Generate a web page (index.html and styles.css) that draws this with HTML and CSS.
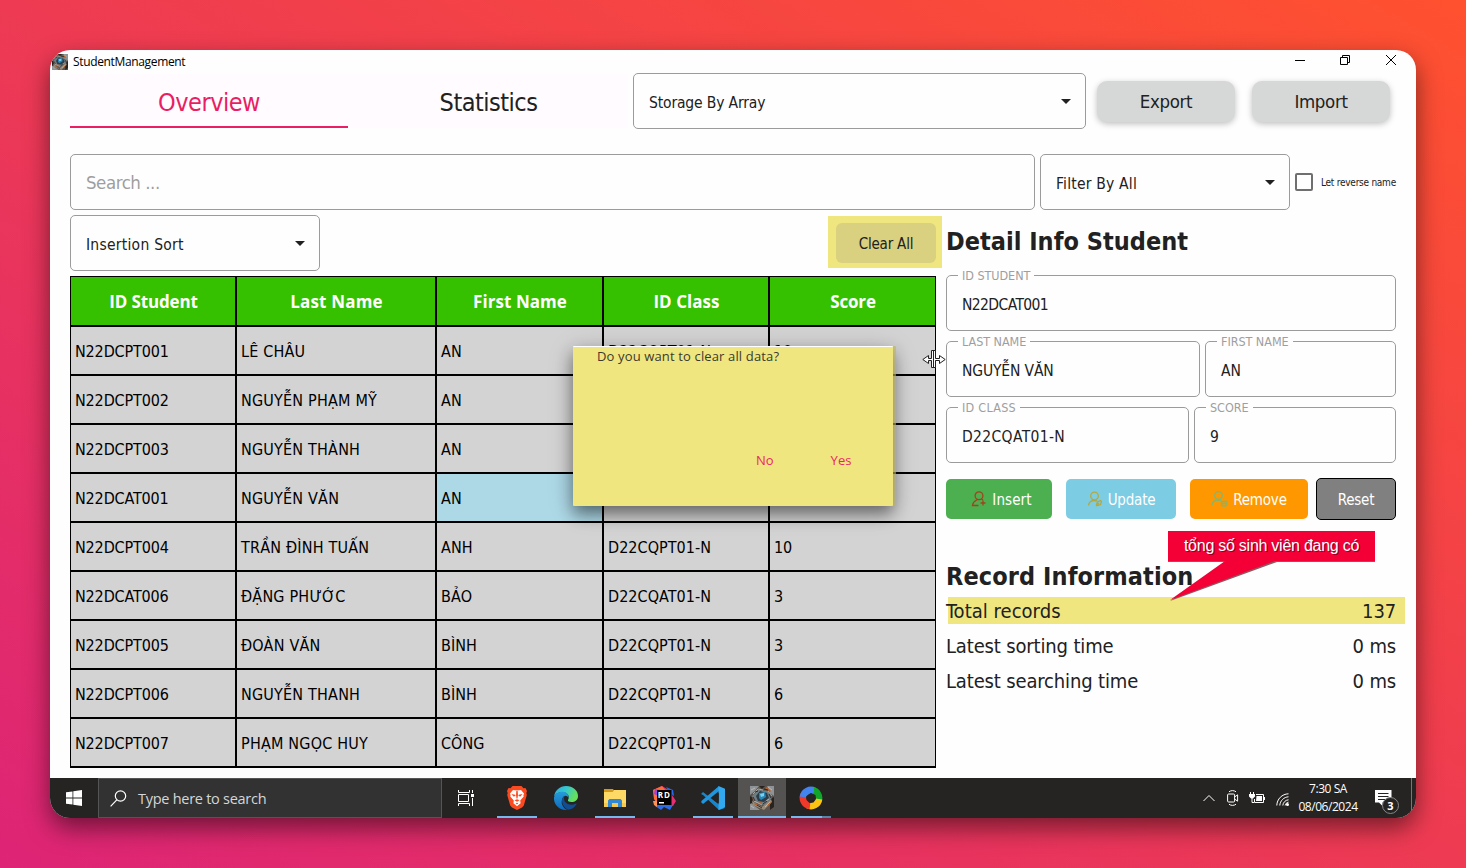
FILE: index.html
```html
<!DOCTYPE html>
<html lang="vi">
<head>
<meta charset="utf-8">
<title>StudentManagement</title>
<link rel="stylesheet" href="styles.css">
</head>
<body>
<svg class="defs" width="0" height="0" aria-hidden="true">
  <defs>
    <symbol id="app-art" viewBox="0 0 24 24">
      <path fill="#5c544c" d="M0 0h24v24H0z"/>
      <path fill="#8d9396" d="M0 0h9L5 5 0 9zM17 0h7v10l-4-3zM0 16l6 5 4 3H0z"/>
      <path fill="#29231f" d="M9 0h6l-3 3zM20 13l4-2v10l-4 3zM0 10l3 2-1 5-2 1z"/>
      <path fill="#9a8b78" d="M2 15l10 6 9-8 1 3-8 8-11-5z"/>
      <path fill="#6e7c84" d="M2 10l6-6 10 1 4 7-8 7-10-3z"/>
      <path fill="#b65f2c" d="M4 18l3 2 1-1-3-2zM15 2l5 4 1-1-4-4zM2 12l2 3 1-1zM17 19l3-3 1 1-3 3zM7 15l5 1-1 1-4-1z"/>
      <path fill="#2c3c48" d="M6 10l4-5 7 2 2 5-5 4-6-1z"/>
      <path fill="#2a86b4" d="M9 7l6-1 1 5-5 3-2-2z"/>
      <path fill="#7bd2ee" d="M10 8l4-1v3l-3 1z"/>
      <path fill="none" stroke="#cfcabe" stroke-width=".7" d="M3 8l5-5 5 1M18 5l4 5M4 15l8 4M15 21l5-5M1 4l4-2M18 1l4 3M16 15l3-2M1 20l3 2"/>
      <path fill="none" stroke="#1d1a18" stroke-width=".8" d="M5 6l3-1M19 8l2 4M7 19l5 3M13 18l4-3M14 3l4 1M3 11l2 4"/>
    </symbol>
    <symbol id="caret" viewBox="0 0 10 5"><path d="M0 0h10L5 5z"/></symbol>
  </defs>
</svg>

<div class="window">
  <header class="titlebar">
    <svg class="titlebar-icon"><use href="#app-art"/></svg>
    <span class="titlebar-name">StudentManagement</span>
    <div class="window-controls">
      <svg width="10" height="10" viewBox="0 0 10 10"><path d="M0 5.500h10"/></svg>
      <svg width="10" height="10" viewBox="0 0 10 10"><path d="M.5 2.500h7v7h-7zM2.500 2.500v-2h7v7h-2"/></svg>
      <svg width="10" height="10" viewBox="0 0 10 10"><path d="M0 0l10 10M10 0L0 10"/></svg>
    </div>
  </header>

  <main class="content">
    <div class="row-top">
      <nav class="tabs">
        <div class="tab tab-active">Overview</div>
        <div class="tab">Statistics</div>
      </nav>
      <div class="box select storage"><span>Storage By Array</span><svg class="caret"><use href="#caret"/></svg></div>
      <div class="file-actions">
        <button class="btn-file">Export</button>
        <button class="btn-file">Import</button>
      </div>
    </div>

    <div class="row-search">
      <div class="box search">Search ...</div>
      <div class="box select filter"><span>Filter By All</span><svg class="caret"><use href="#caret"/></svg></div>
      <div class="reverse"><i class="checkbox"></i><span>Let reverse name</span></div>
    </div>

    <div class="row-main">
      <section class="left">
        <div class="list-tools">
          <div class="box select sort"><span>Insertion Sort</span><svg class="caret"><use href="#caret"/></svg></div>
          <div class="clear-mark"><button class="btn-clear">Clear All</button></div>
        </div>
        <div class="table">
          <div class="th">ID Student</div><div class="th">Last Name</div><div class="th">First Name</div><div class="th">ID Class</div><div class="th">Score</div>
          <div>N22DCPT001</div><div>LÊ CHÂU</div><div>AN</div><div>D22CQPT01-N</div><div>10</div>
          <div>N22DCPT002</div><div>NGUYỄN PHẠM MỸ</div><div>AN</div><div></div><div></div>
          <div>N22DCPT003</div><div>NGUYỄN THÀNH</div><div>AN</div><div></div><div></div>
          <div>N22DCAT001</div><div>NGUYỄN VĂN</div><div class="picked">AN</div><div>D22CQAT01-N</div><div></div>
          <div>N22DCPT004</div><div>TRẦN ĐÌNH TUẤN</div><div>ANH</div><div>D22CQPT01-N</div><div>10</div>
          <div>N22DCAT006</div><div>ĐẶNG PHƯỚC</div><div>BẢO</div><div>D22CQAT01-N</div><div>3</div>
          <div>N22DCPT005</div><div>ĐOÀN VĂN</div><div>BÌNH</div><div>D22CQPT01-N</div><div>3</div>
          <div>N22DCPT006</div><div>NGUYỄN THANH</div><div>BÌNH</div><div>D22CQPT01-N</div><div>6</div>
          <div>N22DCPT007</div><div>PHẠM NGỌC HUY</div><div>CÔNG</div><div>D22CQPT01-N</div><div>6</div>
        </div>
      </section>

      <section class="right">
        <h2 class="t-detail">Detail Info Student</h2>
        <div class="fields">
          <div class="box field f-id"><label>ID STUDENT</label>N22DCAT001</div>
          <div class="field-pair pair-name">
            <div class="box field"><label>LAST NAME</label>NGUYỄN VĂN</div>
            <div class="box field"><label>FIRST NAME</label>AN</div>
          </div>
          <div class="field-pair pair-class">
            <div class="box field f-class"><label>ID CLASS</label>D22CQAT01-N</div>
            <div class="box field"><label>SCORE</label>9</div>
          </div>
        </div>
        <div class="actions">
          <button class="act insert"><svg width="16" height="16" viewBox="0 0 16 16"><circle cx="8" cy="4.700" r="3.900"/><path d="M5.500 8C8 9.500 2 8.500 1.500 14.500H7.500M9.500 12h5M12 9.500v5M10.500 8l1.500 1"/></svg>Insert</button>
          <button class="act update"><svg width="16" height="16" viewBox="0 0 16 16"><circle cx="7.500" cy="5" r="3.800"/><path d="M1.500 14.500c.3-3 2.500-5 6-5 1 0 2 .3 2.500.8M9.500 13.500l1-2.500 3-1.500 1 1.200-1 2.800-3 1zM9 15l3-3"/></svg>Update</button>
          <button class="act remove"><svg width="17" height="16" viewBox="0 0 17 16"><circle cx="7.500" cy="4.500" r="3.800"/><path d="M1 14.500c.2-3.500 2.500-5.500 6.500-5.500 1.200 0 2 .3 2.700.8M10.500 10.500h5.500v3c0 2-5.500 2-5.500 0zM10.500 12.500h5.500"/></svg>Remove</button>
          <button class="act reset">Reset</button>
        </div>
        <h2 class="t-record">Record Information</h2>
        <div class="stats">
          <div class="stat stat-marked"><span>Total records</span><span>137</span></div>
          <div class="stat"><span>Latest sorting time</span><span>0 ms</span></div>
          <div class="stat"><span>Latest searching time</span><span>0 ms</span></div>
        </div>
        <div class="callout">
          <svg width="207" height="72" viewBox="0 0 207 72">
            <path class="callout-shade" d="M0 1h207v30H109L2 70l55-39H0z"/>
            <path class="callout-fill" d="M0 0h207v30H107L2 69 57 30H0z"/>
          </svg>
          <span>tổng số sinh viên đang có</span>
        </div>
      </section>
    </div>
  </main>

  <div class="dialog">
    <p>Do you want to clear all data?</p>
    <div class="dialog-buttons"><button>No</button><button>Yes</button></div>
  </div>

  <svg class="cursor" width="24" height="20" viewBox="0 0 24 20">
    <path d="M9.500 9.500H6.500v-3L.800 10.500l5.700 4v-3h3v7h4v-7h4v3l5.700-4-5.700-4v3h-4v-8h-4zM11.500 1v17"/>
  </svg>

  <footer class="taskbar">
    <div class="start"><svg width="16" height="16" viewBox="0 0 16 16"><path fill="#fff" d="M0 2.300l6.500-.9v6.100H0zM7.300 1.300L16 0v7.500H7.300zM0 8.400h6.500v6.200L0 13.700zM7.300 8.400H16V16l-8.700-1.300z"/></svg></div>
    <div class="taskbar-search">
      <svg width="17" height="17" viewBox="0 0 17 17"><circle cx="10.500" cy="6" r="5.200"/><path d="M6.800 9.800L.600 16.300"/></svg>
      <span>Type here to search</span>
    </div>
    <div class="slot taskview"><svg width="17" height="16" viewBox="0 0 17 16"><path d="M.5 0v2.500h11V0M.5 16v-2.500h11V16M.5 4.500h10v7h-10zM14.500 0v3M14.500 8v8" fill="none" stroke="#fff"/><path fill="#fff" d="M13 4h3v3h-3z"/></svg></div>
    <div class="slot open">
      <svg width="20" height="24" viewBox="0 0 20 24"><path fill="#fb4a20" d="M5.500 0h9l2 2.300 2-.2L20 5l-.7 2 .5 2-3 10.500-1.800 2L10 24l-5-2.500-1.800-2L.2 9l.5-2L0 5l1.500-2.900 2 .2z"/><path fill="#fff" d="M6 4l4 .6L14 4l3 3.500-.6 2 .3 1-3.500 4 .4 2.800-3.600 3-3.600-3 .4-2.800-3.500-4 .3-1-.6-2z"/><path fill="#fb4a20" d="M4.500 8l3.700.7.500 1.400-2.200.4zM15.500 8l-3.700.7-.5 1.400 2.200.4zM9.300 5h1.400l.3 4-.5 3.500h-1L9 9zM7.500 14.300l2.500-1.100 2.500 1.100-2.500 1.500zM8.700 17.300l1.300-.6 1.300.6-1.300 1.200z"/></svg>
    </div>
    <div class="slot">
      <svg width="24" height="24" viewBox="0 0 24 24">
        <defs><linearGradient id="eg" x1="0" y1="0" x2="1" y2=".4"><stop offset="0" stop-color="#2ba8e0"/><stop offset=".5" stop-color="#36c7cf"/><stop offset="1" stop-color="#66e05a"/></linearGradient><linearGradient id="eb" x1="0" y1="0" x2="0" y2="1"><stop offset="0" stop-color="#249ddb"/><stop offset="1" stop-color="#1166b8"/></linearGradient></defs>
        <path fill="url(#eg)" d="M0 11C.8 4 6 0 12 0c7 0 12 4.500 12 10 0 4-3 6-6.500 6-2.500 0-4-1-3.500-2 2.500-4-1-8-5.500-8C4 6 1 8.500 0 11z"/>
        <path fill="url(#eb)" d="M0 11.500C1 8 4.500 5.800 8.500 5.800c4 0 6.500 3 6 6.200-.5-1.500-2-2.300-3.500-2.300-3 2-4 5.500-3 8.500 1 3 3 5 5.500 5.800C5 24.500-.5 18.500 0 11.500z"/>
        <path fill="#114d91" d="M10.500 9.800C6.500 12 7 20 14 23.800c3.500-.4 6.500-2.300 8.500-5.600.2-.5-.2-.8-.8-.5C16 20.500 10 17 10 12.500c0-1 .2-2 .5-2.700z"/>
      </svg>
    </div>
    <div class="slot open">
      <svg width="22" height="18" viewBox="0 0 22 18"><path fill="#ffd966" d="M0 1h22v17H0z"/><path fill="#d79a16" d="M0 0h9l1 1.500L8.500 3H0z"/><path fill="#f5c84e" d="M0 14h22v4H0z"/><path fill="#3189d4" d="M4 18v-6.500L5.500 10h11l1.500 1.500V18h-4v-4H8v4z"/></svg>
    </div>
    <div class="slot">
      <svg width="24" height="24" viewBox="0 0 24 24"><path fill="#e62f70" d="M1 4l9-4 5 3 4 2 1 4 4 6-3 5H5L2 12z"/><path fill="#ff6c37" d="M1 4l9-4 4 5-9 12-3-4z"/><path fill="#9b42df" d="M3 3l5 1-2 6-4-2z"/><path fill="#2b6be8" d="M14 1l7 3 1 6-4-3zM8 19l6-2 7 2-3 5-6-3-3 3-6-4 1-4z"/><path fill="#ff9155" d="M1 15h4v6l-3-2z"/><path d="M5 4h14.500v15H5z"/><text x="5.800" y="11.800" class="rd" textLength="12">RD</text><path fill="#fff" d="M7 16h5v1.500H7z"/></svg>
    </div>
    <div class="slot open">
      <svg width="24" height="24" viewBox="0 0 24 24"><path fill="#1687cf" d="M0 8l2-2 16.500 13L24 22l-6 2-16-15z"/><path fill="#2196dd" d="M0 16l2 2L18 5V0L1 14.500z"/><path fill="#32a9ee" d="M17.500 0L24 2.800v18.400L17.500 24z"/><path fill="#252422" d="M17.800 6.800v10.400L11 12z"/></svg>
    </div>
    <div class="slot open focused"><svg width="24" height="24"><use href="#app-art"/></svg></div>
    <div class="slot grouped">
      <svg width="24" height="24" viewBox="0 0 24 24"><g fill="none" stroke-width="7"><path stroke="#12a52b" d="M13 4.200A7.800 7.800 0 0 1 19 15.500"/><path stroke="#fdc512" d="M19.800 13A7.800 7.800 0 0 1 8.500 19"/><path stroke="#ee392b" d="M11 19.800A7.800 7.800 0 0 1 5 8.500"/><path stroke="#4284f0" d="M4.200 11A7.800 7.800 0 0 1 15.500 5"/></g><path fill="#12a52b" d="M15 1.400l4 2.600 3.500 5-5 2L15 7.500z"/><path fill="#252422" d="M12 7l4.500 2 .5 4-2.500 3.500-4 .5L7.500 14 7 10.500z"/></svg>
    </div>
    <div class="tray">
      <svg class="chev" width="12" height="8" viewBox="0 0 12 8"><path d="M.5 7L6 1.500 11.500 7"/></svg>
      <svg class="meet" width="12" height="16" viewBox="0 0 12 16"><rect x=".6" y="4" width="7" height="8" rx="1"/><path d="M7.600 7l3-2.200v6.400l-3-2.200M2 1.800c2-1.600 5-1.600 7 0M2 14.200c2 1.600 5 1.600 7 0"/></svg>
      <svg class="batt" width="16" height="12" viewBox="0 0 16 12"><path d="M1.500 0v2M4.500 0v2M3 6v4.500h2M7 2.500h7.500v8H5.500V7M15.500 5v3"/><path class="solid" d="M0 2h6v2.500L4 6.500H2L0 4.500zM7.500 4H13v5H7z"/></svg>
      <svg class="wifi" width="13" height="13" viewBox="0 0 13 13"><path d="M.8 12.500C1 6 6 1 12.500.8M3.800 12.500C4 7.800 8 4 12.500 3.800M6.800 12.500c.2-3 2.700-5.500 5.700-5.700M9.200 12.500c.2-1.700 1.500-3 3.300-3.300"/><circle class="solid" cx="11.500" cy="11.500" r="1.500"/></svg>
      <div class="clock"><span>7:30 SA</span><span>08/06/2024</span></div>
      <div class="notes"><svg width="17" height="16" viewBox="0 0 17 16"><path fill="#fff" d="M0 0h16.500v12.500H7.500V16L4 12.500H0z"/><path stroke="#252422" stroke-width="1.200" d="M3 3.500h10.500M3 6.500h10.500M3 9.500h7"/></svg><b>3</b></div>
      <i class="peek"></i>
    </div>
  </footer>
</div>
</body>
</html>
```

FILE: styles.css
```css
* { box-sizing: border-box; }

body {
  margin: 0;
  width: 1466px;
  height: 868px;
  padding: 50px;
  overflow: hidden;
  background: linear-gradient(to top right, #dd2476, #ff512f);
  font-family: "DejaVu Sans Condensed", "Noto Sans", sans-serif;
  color: #212121;
}

button { font: inherit; border: 0; padding: 0; margin: 0; color: inherit; }
h2, p { margin: 0; }
.defs { position: absolute; }

.window {
  position: relative;
  display: flex;
  flex-direction: column;
  width: 1366px;
  height: 768px;
  border-radius: 20px;
  background: #fefefe;
  box-shadow: 0 10px 25px rgba(0, 0, 0, .5);
}

/* Title bar */
.titlebar {
  display: flex;
  align-items: center;
  height: 23px;
  padding-left: 2px;
  overflow: hidden;
  border-radius: 20px 0 0 0;
  font: 12px "Open Sans", sans-serif;
  color: #000;
}
.titlebar-icon { width: 16px; height: 16px; margin-right: 5px; }
.titlebar-name { letter-spacing: -.35px; }
.window-controls {
  display: flex;
  gap: 36px;
  margin-left: auto;
  padding: 0 20px 3px 0;
}
.window-controls svg { display: block; fill: none; stroke: #000; }
.window-controls svg:first-child { margin-right: -1px; }

/* Content */
.content { flex: 1; padding: 0 20px; }
.box {
  display: flex;
  align-items: center;
  height: 56px;
  padding: 3px 15px 0;
  border: 1px solid #9b9b9b;
  border-radius: 5px;
  font-size: 15.500px;
  letter-spacing: -.15px;
  white-space: nowrap;
}
.select { justify-content: space-between; padding-right: 14px; }
.caret { width: 10px; height: 5px; margin-bottom: 3px; fill: #212121; }

.row-top { display: flex; height: 56px; }
.tabs {
  display: flex;
  width: 558px;
  height: 54px;
  margin: 1px 5px 0 0;
  background: #fffbff;
}
.tab {
  display: flex;
  align-items: center;
  justify-content: center;
  width: 278px;
  padding-top: 5px;
  border-bottom: 2px solid transparent;
  font-size: 25px;
  letter-spacing: -.5px;
}
.tab + .tab { width: 280px; padding-left: 1px; }
.tab-active { color: #e91e63; border-color: #e91e63; }
.storage { width: 453px; }
.file-actions { display: flex; gap: 17px; margin: 8px 0 0 11px; }
.btn-file {
  width: 138px;
  height: 41px;
  border-radius: 10px;
  background: #d6d7d7;
  box-shadow: 0 2px 6px rgba(0, 0, 0, .25);
  font-size: 18.500px;
  letter-spacing: -.35px;
}

.row-search { display: flex; gap: 5px; margin-top: 25px; }
.search { flex: none; width: 965px; padding-top: 1px; font-size: 18.500px; letter-spacing: -.45px; color: #9e9e9e; }
.filter { flex: none; width: 250px; letter-spacing: .2px; }
.reverse { display: flex; align-items: center; gap: 8px; width: 101px; font-size: 10px; letter-spacing: -.25px; white-space: nowrap; }
.checkbox { flex: none; width: 18px; height: 18px; border: 2px solid #6f6f6f; border-radius: 2px; }

.row-main { display: flex; gap: 10px; margin-top: 5px; }
.left { width: 866px; }
.list-tools { display: flex; justify-content: space-between; height: 61px; }
.sort { width: 250px; letter-spacing: .25px; }
.clear-mark {
  width: 114px;
  height: 52px;
  margin: 1px -6px 0 0;
  padding: 7px 8px;
  background: #f0e67f;
}
.btn-clear {
  width: 100px;
  height: 40px;
  padding-top: 2px;
  border-radius: 6px;
  background: #d9d080;
  font-size: 15px;
  letter-spacing: -.2px;
}

.table {
  display: grid;
  grid-template-columns: 166px 200px 167px 166px 167px;
  grid-template-rows: 50px;
  grid-auto-rows: 49px;
  border-bottom: 1px solid #000;
}
.table > div {
  display: flex;
  align-items: center;
  padding: 2px 0 0 4px;
  border: 1px solid #000;
  background: #d3d3d3;
  color: #000;
  font-size: 16px;
  letter-spacing: -.15px;
  white-space: nowrap;
}
.table > div:nth-child(5n+2) { letter-spacing: .2px; }
.table > div:nth-child(5n+3),
.table > div:nth-child(5n+4) { letter-spacing: .05px; }
.table > .th {
  justify-content: center;
  padding: 1px 0 0 1px;
  background: #35c000;
  color: #fff;
  font: bold 17px "Open Sans", sans-serif;
}
.table > .picked { background: #add8e6; }

/* Detail panel */
.right { position: relative; width: 450px; }
h2 { height: 60px; font-size: 25px; line-height: 54px; font-weight: bold; letter-spacing: .02px; white-space: nowrap; }
.fields { display: grid; gap: 10px; }
.field-pair { display: grid; gap: 5px; }
.pair-name { grid-template-columns: 254px 191px; }
.pair-class { grid-template-columns: 243px 202px; }
.field { position: relative; }
.f-id { letter-spacing: -.6px; }
.f-class { letter-spacing: .35px; }
.field label {
  position: absolute;
  left: 11px;
  top: -9px;
  padding: 0 4px;
  background: #fefefe;
  color: #9e9e9e;
  font-size: 12.500px;
  line-height: 18px;
  letter-spacing: -.05px;
}
.f-class label { letter-spacing: .25px; }
.actions { display: flex; align-items: center; height: 42px; margin-top: 15px; }
.act {
  display: flex;
  align-items: center;
  justify-content: center;
  gap: 5px;
  height: 40px;
  padding-top: 2px;
  border-radius: 5px;
  color: #fff;
  font-size: 15px;
  letter-spacing: -.2px;
}
.act svg { margin-top: -2px; fill: none; stroke-width: 1.300; }
.insert { width: 106px; margin-right: 14px; padding-left: 5px; letter-spacing: .1px; background: #4caf50; }
.insert svg { stroke: #a5421a; }
.update { width: 110px; margin-right: 14px; background: #7ccce4; }
.update svg { stroke: #b5a83f; }
.remove { width: 118px; margin-right: 8px; background: #ff9800; }
.remove svg { stroke: #85b56d; }
.reset { width: 80px; height: 42px; border: 1px solid #000; background: #808080; }
.t-record { height: 38px; margin-top: 30px; letter-spacing: .1px; }
.stats { margin-top: 9px; }
.stat {
  display: flex;
  justify-content: space-between;
  align-items: center;
  height: 27px;
  margin-bottom: 8px;
  font-size: 20px;
  letter-spacing: -.15px;
}
.stat-marked {
  width: 459px;
  padding-right: 9px;
  background: linear-gradient(to right, transparent 2px, #f0e67f 2px);
}
.stat-marked span:first-child { letter-spacing: .03px; }

.callout { position: absolute; left: 222px; top: 316px; width: 207px; height: 72px; }
.callout svg { position: absolute; left: 0; top: 0; }
.callout-fill { fill: #f40037; }
.callout-shade { fill: #8a5a62; }
.callout span {
  position: relative;
  display: block;
  text-align: center;
  color: #fff;
  font: 16px/29px "Liberation Sans", sans-serif;
  letter-spacing: -.25px;
  text-shadow: 1px 1px 0 rgba(80, 0, 20, .6);
  white-space: nowrap;
}

/* Confirmation dialog */
.dialog {
  position: absolute;
  left: 523px;
  top: 296px;
  width: 320px;
  height: 160px;
  border-top: 1px solid #fff;
  border-radius: 1px;
  background: #f0e67f;
  box-shadow: 3px 0 0 rgba(190, 180, 90, .6), 0 8px 16px rgba(0, 0, 0, .45), 0 4px 28px rgba(0, 0, 0, .15);
  font: 13px "Open Sans", sans-serif;
  color: #3c3a2e;
}
.dialog p { padding-left: 24px; line-height: 19px; letter-spacing: .14px; }
.dialog-buttons { display: flex; gap: 57px; margin: 85px 0 0 183px; }
.dialog button { background: none; color: #e9286a; }

.cursor { position: absolute; left: 872px; top: 299px; fill: #fff; stroke: #222; }

/* Taskbar */
.taskbar {
  display: flex;
  height: 40px;
  overflow: hidden;
  border-radius: 0 0 20px 20px;
  background: #252422;
  font-family: "Open Sans", sans-serif;
  color: #fff;
}
.start { display: flex; align-items: center; justify-content: center; width: 48px; }
.taskbar-search {
  display: flex;
  align-items: center;
  gap: 11px;
  width: 344px;
  padding-left: 11px;
  border: 1px solid #555;
  background: #323232;
  color: #d6d6d6;
  font-size: 14.500px;
  letter-spacing: -.27px;
}
.taskbar-search svg { fill: none; stroke: #fff; stroke-width: 1.200; }
.slot {
  display: flex;
  align-items: center;
  justify-content: center;
  width: 48px;
  margin-right: 1px;
}
.taskview { margin-right: 3px; }
.open { background: linear-gradient(#76b9ed, #76b9ed) 50% 100% / 40px 2px no-repeat; }
.focused { background: linear-gradient(#76b9ed, #76b9ed) 50% 100% / 48px 2px no-repeat, #545351; }
.grouped {
  background:
    linear-gradient(#76b9ed, #76b9ed) 4px 100% / 31px 2px no-repeat,
    linear-gradient(#5685a8, #5685a8) 35px 100% / 9px 2px no-repeat;
}
.rd { font: bold 8px "Open Sans", sans-serif; fill: #fff; }
.tray { display: flex; align-items: center; margin-left: auto; }
.tray > svg { fill: none; stroke: #fff; }
.tray > svg .solid { fill: #fff; stroke: none; }
.chev { margin-right: 12px; }
.meet { margin-right: 10px; }
.batt { margin-right: 11px; }
.wifi { margin-right: 9px; margin-top: 2px; }
.clock {
  display: flex;
  flex-direction: column;
  align-items: center;
  width: 60px;
  font-size: 12px;
  line-height: 18px;
  letter-spacing: -.45px;
}
.notes { position: relative; width: 53px; height: 16px; padding-left: 17px; }
.notes svg { display: block; }
.notes b {
  position: absolute;
  left: 24px;
  top: 7px;
  width: 17px;
  height: 17px;
  border: 1px solid #888;
  border-radius: 50%;
  background: #252422;
  font-size: 11px;
  line-height: 15px;
  text-align: center;
}
.peek { width: 1px; height: 40px; margin: 0 4px 0 0; background: #777; }
```
